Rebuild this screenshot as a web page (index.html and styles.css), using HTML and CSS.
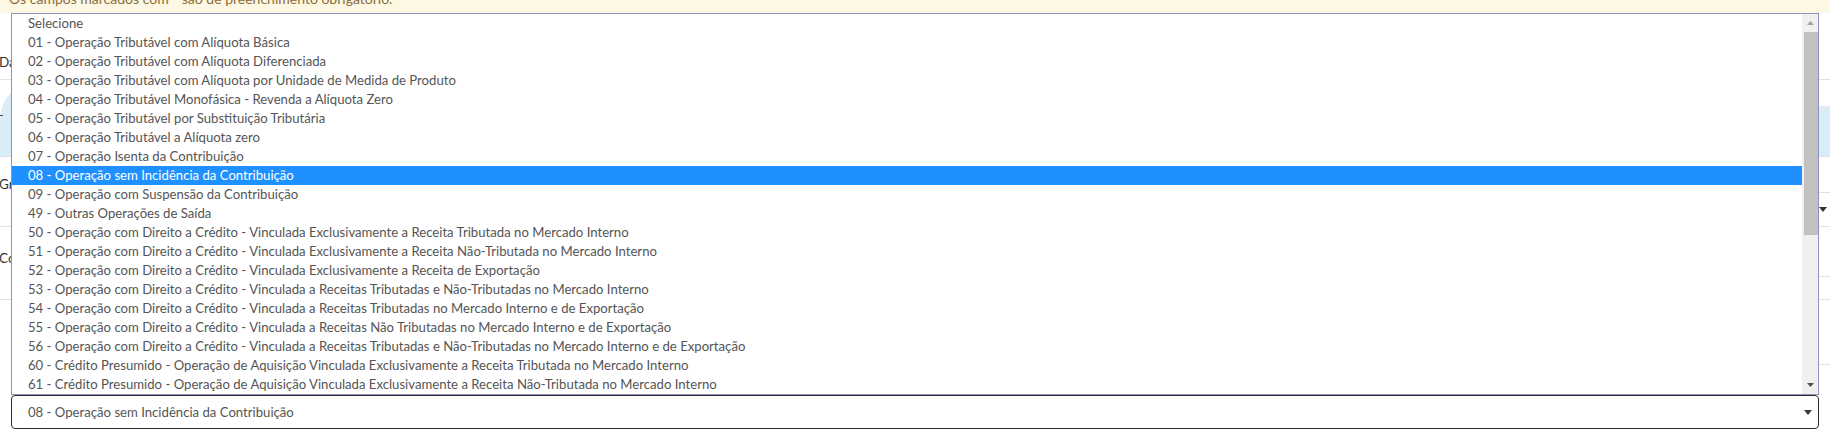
FILE: index.html
```html
<!DOCTYPE html>
<html lang="pt-BR">
<head>
<meta charset="utf-8">
<title>Formulário</title>
<link rel="stylesheet" href="styles.css">
</head>
<body>
<div class="page">
  <div class="alert"><div class="alert-text">Os campos marcados com * são de preenchimento obrigatório.</div></div>
  <div class="row row-1"><span class="label label-1">Data de Início</span></div>
  <div class="row row-2">
    <div class="info-panel"><span class="info-dash"></span></div>
    <div class="info-side"><div class="info-side-cap"></div><div class="info-side-fill"></div></div>
  </div>
  <div class="row row-3">
    <span class="label label-3">Grupo</span>
    <div class="side-select"><svg class="caret" width="8" height="5" viewBox="0 0 8 5"><path d="M0 0h8L4 5z" fill="#333"/></svg></div>
  </div>
  <div class="row row-4">
    <span class="label label-4">Código</span>
    <div class="side-input"></div>
  </div>
  <div class="row row-5"><div class="side-line"></div></div>
  <div class="select-wrap">
    <div class="select-box">
      <span class="select-value">08 - Operação sem Incidência da Contribuição</span>
      <svg class="caret" width="8" height="5" viewBox="0 0 8 5"><path d="M0 0h8L4 5z" fill="#3a3a3a"/></svg>
    </div>
  </div>

  <div class="popup">
    <ul class="options">
      <li>Selecione</li>
      <li>01 - Operação Tributável com Alíquota Básica</li>
      <li>02 - Operação Tributável com Alíquota Diferenciada</li>
      <li>03 - Operação Tributável com Alíquota por Unidade de Medida de Produto</li>
      <li>04 - Operação Tributável Monofásica - Revenda a Alíquota Zero</li>
      <li>05 - Operação Tributável por Substituição Tributária</li>
      <li>06 - Operação Tributável a Alíquota zero</li>
      <li>07 - Operação Isenta da Contribuição</li>
      <li class="selected">08 - Operação sem Incidência da Contribuição</li>
      <li>09 - Operação com Suspensão da Contribuição</li>
      <li>49 - Outras Operações de Saída</li>
      <li>50 - Operação com Direito a Crédito - Vinculada Exclusivamente a Receita Tributada no Mercado Interno</li>
      <li>51 - Operação com Direito a Crédito - Vinculada Exclusivamente a Receita Não-Tributada no Mercado Interno</li>
      <li>52 - Operação com Direito a Crédito - Vinculada Exclusivamente a Receita de Exportação</li>
      <li>53 - Operação com Direito a Crédito - Vinculada a Receitas Tributadas e Não-Tributadas no Mercado Interno</li>
      <li>54 - Operação com Direito a Crédito - Vinculada a Receitas Tributadas no Mercado Interno e de Exportação</li>
      <li>55 - Operação com Direito a Crédito - Vinculada a Receitas Não Tributadas no Mercado Interno e de Exportação</li>
      <li>56 - Operação com Direito a Crédito - Vinculada a Receitas Tributadas e Não-Tributadas no Mercado Interno e de Exportação</li>
      <li>60 - Crédito Presumido - Operação de Aquisição Vinculada Exclusivamente a Receita Tributada no Mercado Interno</li>
      <li>61 - Crédito Presumido - Operação de Aquisição Vinculada Exclusivamente a Receita Não-Tributada no Mercado Interno</li>
    </ul>
    <div class="scrollbar">
      <div class="sb-btn"><svg width="7" height="4" viewBox="0 0 7 4"><path d="M0 4h7L3.5 0z" fill="#a3a3a3"/></svg></div>
      <div class="sb-track"><div class="sb-thumb"></div></div>
      <div class="sb-btn"><svg width="7" height="4" viewBox="0 0 7 4"><path d="M0 0h7L3.5 4z" fill="#505050"/></svg></div>
    </div>
  </div>
</div>
</body>
</html>
```

FILE: styles.css
```css
* { box-sizing: border-box; }
html, body { margin: 0; padding: 0; background: #fff; }
body {
  font-family: Lato, "Liberation Sans", sans-serif;
  color: #555;
}
.page {
  position: relative;
  width: 1830px;
  height: 431px;
  overflow: hidden;
}
.alert {
  height: 13px;
  overflow: hidden;
  background: #fcf8e3;
}
.alert-text {
  margin-top: -11px;
  padding-left: 9px;
  font-size: 14px;
  line-height: 20px;
  color: #8a6d3b;
  white-space: nowrap;
}
.row {
  display: flex;
  flex-direction: column;
  align-items: stretch;
  border-bottom: 1px solid #e2e2e2;
  overflow: hidden;
}
.label {
  display: block;
  flex: none;
  margin-left: -1px;
  font-size: 13.5px;
  line-height: 16px;
  height: 16px;
  color: #333;
  white-space: nowrap;
}
.label-1 { margin-top: 41px; }
.label-3 { margin-top: 19px; }
.label-4 { margin-top: 23px; }
.row-1 { height: 67px; }
.row-2 { height: 77px; flex-direction: row; }
.info-panel {
  flex: 1;
  background: #d9ecf7;
  border-radius: 40px 0 0 0;
  display: flex;
  align-items: center;
  padding-top: 2px;
}
.info-dash {
  display: block;
  width: 3px;
  height: 1px;
  background: #444;
  margin-top: -8px;
}
.info-side {
  width: 150px;
  display: flex;
  flex-direction: column;
}
.info-side-cap { height: 26px; background: #fff; }
.info-side-fill { flex: 1; background: #d9ecf7; }
.row-3 { height: 70px; }
.side-select {
  flex: none;
  align-self: flex-end;
  width: 150px;
  height: 34px;
  margin-top: auto;
  border-top: 1px solid #e2e2e2;
  display: flex;
  align-items: center;
  justify-content: flex-end;
  padding-right: 3px;
}
.row-4 { height: 73px; }
.side-input {
  flex: none;
  align-self: flex-end;
  width: 150px;
  height: 26px;
  margin-top: 10px;
  border-top: 1px solid #e2e2e2;
  border-bottom: 1px solid #e2e2e2;
}
.row-5 { height: 95px; border-bottom: none; }
.side-line {
  align-self: flex-end;
  width: 150px;
  margin-top: 64px;
  border-top: 1px solid #e2e2e2;
}
.select-wrap { padding: 0 11px; }
.select-box {
  width: 1808px;
  height: 34px;
  border: 1px solid #2b2b2b;
  border-radius: 4px;
  display: flex;
  align-items: center;
  justify-content: space-between;
  padding: 0 6px 0 16px;
  font-size: 13.15px;
  color: #555;
  background: #fff;
}
.caret { display: block; }

.popup {
  position: absolute;
  top: 13px;
  left: 11px;
  width: 1808px;
  height: 382px;
  border: 1px solid #8b93c0;
  background: #fff;
  display: flex;
}
.options {
  list-style: none;
  margin: 0;
  padding: 0;
  flex: 1;
  font-size: 13.15px;
}
.options li {
  height: 19px;
  line-height: 19px;
  padding-left: 16px;
  white-space: nowrap;
  color: #555;
}
.options li.selected {
  background: #1e90ff;
  color: #fff;
}
.scrollbar {
  width: 16px;
  background: #f0f0f0;
  display: flex;
  flex-direction: column;
}
.sb-btn {
  height: 18px;
  display: flex;
  align-items: center;
  justify-content: center;
}
.sb-track { flex: 1; }
.sb-thumb {
  height: 203px;
  margin: 0 0 0 2px;
  background: #c1c1c1;
}
```
